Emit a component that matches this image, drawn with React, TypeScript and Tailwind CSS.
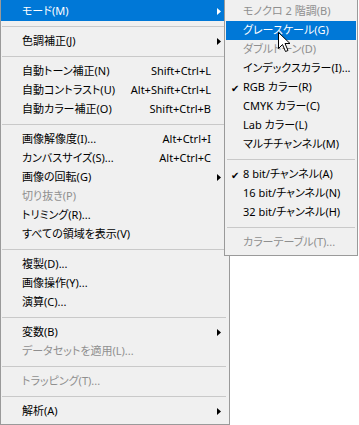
type Row =
  | { sep: true }
  | {
      sep?: false
      label: string
      shortcut?: string
      sub?: boolean
      disabled?: boolean
      active?: boolean
      check?: boolean
    }

const mainItems: Row[] = [
  { label: '色調補正(J)', sub: true },
  { sep: true },
  { label: '自動トーン補正(N)', shortcut: 'Shift+Ctrl+L' },
  { label: '自動コントラスト(U)', shortcut: 'Alt+Shift+Ctrl+L' },
  { label: '自動カラー補正(O)', shortcut: 'Shift+Ctrl+B' },
  { sep: true },
  { label: '画像解像度(I)...', shortcut: 'Alt+Ctrl+I' },
  { label: 'カンバスサイズ(S)...', shortcut: 'Alt+Ctrl+C' },
  { label: '画像の回転(G)', sub: true },
  { label: '切り抜き(P)', disabled: true },
  { label: 'トリミング(R)...' },
  { label: 'すべての領域を表示(V)' },
  { sep: true },
  { label: '複製(D)...' },
  { label: '画像操作(Y)...' },
  { label: '演算(C)...' },
  { sep: true },
  { label: '変数(B)', sub: true },
  { label: 'データセットを適用(L)...', disabled: true },
  { sep: true },
  { label: 'トラッピング(T)...', disabled: true },
  { sep: true },
  { label: '解析(A)', sub: true },
]

const modeItems: Row[] = [
  { label: 'モノクロ 2 階調(B)', disabled: true },
  { label: 'グレースケール(G)', active: true },
  { label: 'ダブルトーン(D)', disabled: true },
  { label: 'インデックスカラー(I)...' },
  { label: 'RGB カラー(R)', check: true },
  { label: 'CMYK カラー(C)' },
  { label: 'Lab カラー(L)' },
  { label: 'マルチチャンネル(M)' },
  { sep: true },
  { label: '8 bit/チャンネル(A)', check: true },
  { label: '16 bit/チャンネル(N)' },
  { label: '32 bit/チャンネル(H)' },
  { sep: true },
  { label: 'カラーテーブル(T)...', disabled: true },
]

function Arrow({ white }: { white?: boolean }) {
  return (
    <svg width="4" height="7" viewBox="0 0 4 7" className="block">
      <polygon points="0,0 4,3.5 0,7" fill={white ? '#ffffff' : '#000000'} />
    </svg>
  )
}

function Separator() {
  return (
    <div className="h-[11px] flex items-center px-[1px]">
      <div className="h-px w-full bg-[#c9c9c9]" />
    </div>
  )
}

function MainRow({ row, first }: { row: Row; first?: boolean }) {
  if (row.sep) return <Separator />
  const color = row.active ? 'bg-[#0078d7] text-white' : row.disabled ? 'text-[#8f8f8f]' : 'text-black'
  return (
    <div className={`flex items-center pl-[21px] ${first ? 'h-[21px] pt-[2px]' : 'h-[19px]'} ${color}`}>
      <span className="flex-1 whitespace-nowrap">{row.label}</span>
      {row.shortcut && <span className="whitespace-nowrap text-right">{row.shortcut}</span>}
      <span className="w-[16px] pl-[6px] flex items-center">{row.sub && <Arrow white={row.active} />}</span>
    </div>
  )
}

function SubRow({ row }: { row: Row }) {
  if (row.sep) return <Separator />
  const color = row.active ? 'bg-[#0078d7] text-white' : row.disabled ? 'text-[#8f8f8f]' : 'text-black'
  return (
    <div className={`flex items-center h-[19px] ${color}`}>
      <span className="w-[17px] pl-[5px] text-[10px] leading-none font-['Noto_Sans_CJK_JP',sans-serif]">
        {row.check ? '✔' : ''}
      </span>
      <span className="whitespace-nowrap">{row.label}</span>
    </div>
  )
}

export default function App() {
  return (
    <div className="relative w-[359px] h-[425px] bg-white overflow-hidden font-['Noto_Sans','Noto_Sans_CJK_JP',sans-serif] text-[11px] [font-feature-settings:'palt']">
      {/* イメージメニュー */}
      <div className="w-[230px] bg-[#f0f0f0] border-l border-r border-b border-[#9a9a9a] pb-[3px] px-0">
        <div className="pr-[2px]">
          <MainRow row={{ label: 'モード(M)', sub: true, active: true }} first />
          <Separator />
          {mainItems.map((r, i) => (
            <MainRow key={i} row={r} />
          ))}
        </div>
      </div>

      {/* モード サブメニュー */}
      <div className="absolute left-[224px] top-[-1px] w-[134px] bg-[#f0f0f0] border border-[#9a9a9a] pt-[2px] pb-[3px] px-[1px]">
        {modeItems.map((r, i) => (
          <SubRow key={i} row={r} />
        ))}
      </div>

      {/* マウスカーソル */}
      <svg className="absolute left-[278px] top-[32px]" width="13" height="21" viewBox="0 0 13 21">
        <path
          d="M0.5,0.5 L0.5,16.5 L4.5,12.5 L7.5,19.5 L10,18.5 L7,11.5 L12,11.5 Z"
          fill="#ffffff"
          stroke="#000000"
          strokeWidth="1"
          strokeLinejoin="miter"
        />
      </svg>
    </div>
  )
}
